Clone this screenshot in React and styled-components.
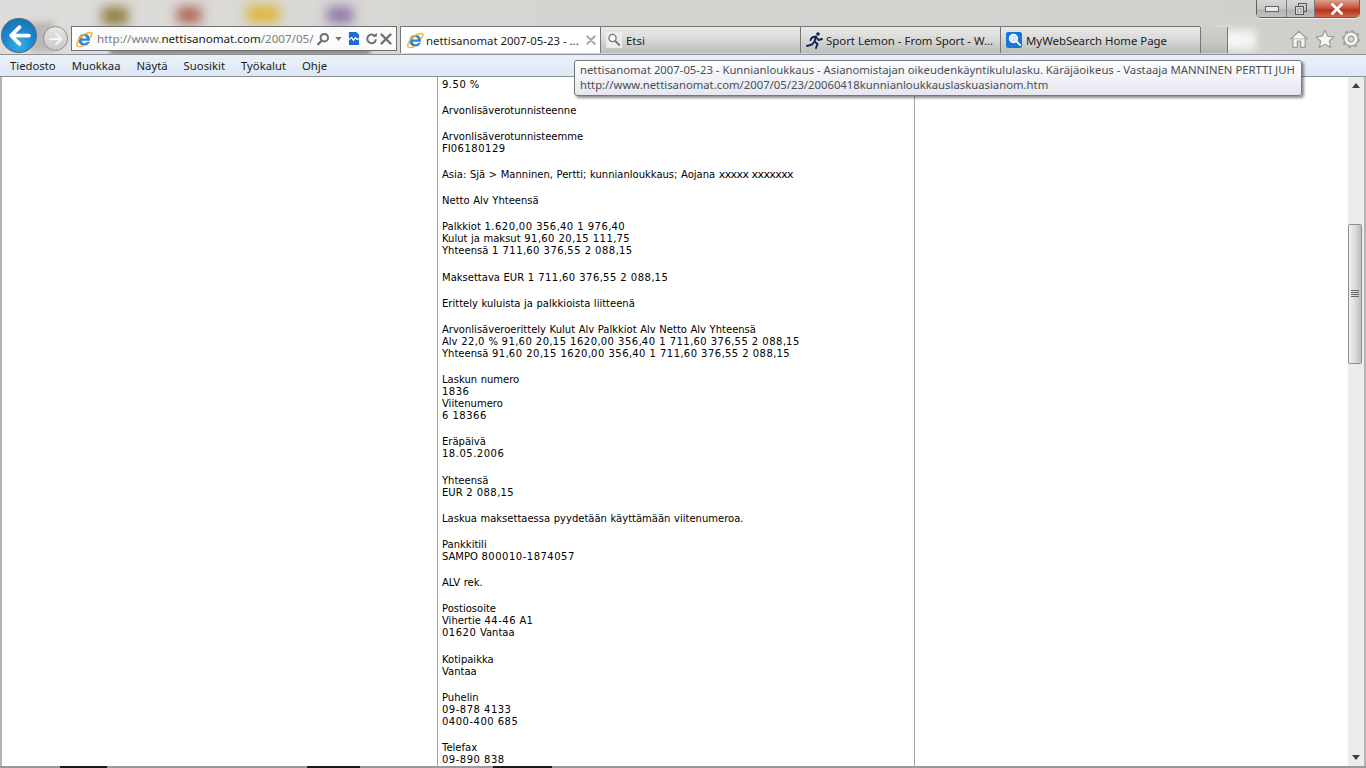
import React from "react";
import styled, { createGlobalStyle } from "styled-components";

const GlobalStyle = createGlobalStyle`
  html, body {
    margin: 0;
    padding: 0;
    background: #fff;
    overflow: hidden;
  }
`;

const UI_FONT = `"Noto Sans", "Open Sans", "Liberation Sans", sans-serif`;

const Window = styled.div`
  position: relative;
  width: 1366px;
  height: 768px;
  overflow: hidden;
  display: flex;
  flex-direction: column;
  font-family: ${UI_FONT};
`;

const Chrome = styled.div`
  position: relative;
  height: 55px;
  flex: none;
  display: flex;
  flex-direction: column;
  overflow: hidden;
  background: linear-gradient(90deg, #dedddb 0%, #d5d4d0 40%, #d4d3cf 70%, #cfcecb 100%);
  border-bottom: 1px solid #8e9195;
  box-sizing: border-box;
`;

const Blob = styled.div`
  position: absolute;
  top: ${(p) => p.$top}px;
  left: ${(p) => p.$left}px;
  width: ${(p) => p.$w}px;
  height: ${(p) => p.$h}px;
  background: ${(p) => p.$color};
  filter: blur(${(p) => p.$blur || 6}px);
`;

const WindowRow = styled.div`
  position: relative;
  height: 18px;
  display: flex;
  justify-content: flex-end;
  padding-right: 6px;
  margin-bottom: 8px;
`;

const WindowControls = styled.div`
  display: flex;
  height: 18px;
  border: 1px solid #5c5e60;
  border-top: 0;
  border-radius: 0 0 5px 5px;
  overflow: hidden;
  box-sizing: border-box;
  box-shadow: 0 1px 0 rgba(255, 255, 255, 0.7);
`;

const ControlButton = styled.div`
  width: ${(p) => p.$w}px;
  display: flex;
  align-items: center;
  justify-content: center;
  border-right: ${(p) => (p.$close ? "0" : "1px solid #77797b")};
  background: ${(p) =>
    p.$close
      ? "linear-gradient(180deg, #d9a18e 0%, #c9563c 45%, #b8321a 60%, #d2684a 100%)"
      : "linear-gradient(180deg, #d8d7d5 0%, #c8c7c5 50%, #b4b3b1 60%, #c2c1bf 100%)"};
`;

const ToolRow = styled.div`
  position: relative;
  flex: 1;
  display: flex;
  align-items: flex-start;
`;

const NavGroup = styled.div`
  width: 71px;
  height: 28px;
  flex: none;
  position: relative;
  display: flex;
  align-items: center;
`;

const BackButton = styled.div`
  position: absolute;
  left: 1px;
  top: -8px;
  width: 36px;
  height: 35px;
  border-radius: 50%;
  display: flex;
  align-items: center;
  justify-content: center;
  background: radial-gradient(circle at 50% 78%, #35b0e8 0%, #1a86cf 50%, #166aa8 100%);
  border: 1px solid #4d6c88;
  box-sizing: border-box;
  z-index: 2;
`;

const ForwardButton = styled.div`
  position: absolute;
  left: 43px;
  top: 0;
  width: 25px;
  height: 25px;
  border-radius: 50%;
  display: flex;
  align-items: center;
  justify-content: center;
  background: linear-gradient(180deg, #e6e6e4, #c9c8c6);
  border: 1px solid #8f8f8f;
  box-sizing: border-box;
`;

const BackHalo = styled.div`
  position: absolute;
  left: 30px;
  top: -4px;
  width: 24px;
  height: 30px;
  background: #b9b8b6;
  filter: blur(3px);
`;

const AddressBar = styled.div`
  width: 326px;
  height: 25px;
  flex: none;
  box-sizing: border-box;
  border: 1px solid #6f7072;
  background: rgba(255, 255, 255, 0.9);
  display: flex;
  align-items: center;
  padding-left: 3px;
  position: relative;
`;

const Url = styled.div`
  margin-left: 4px;
  font-size: 11.6px;
  color: #7b7b7b;
  white-space: nowrap;
  width: 216px;
  flex: none;
`;

const Domain = styled.span`
  color: #1a1a1a;
`;

const AddressIcons = styled.div`
  display: flex;
  align-items: center;
`;

const IconSlot = styled.div`
  width: ${(p) => p.$w}px;
  display: flex;
  justify-content: center;
  align-items: center;
`;

const TabStrip = styled.div`
  margin-left: 3px;
  width: 800px;
  height: 27px;
  flex: none;
  display: flex;
  box-sizing: border-box;
  border-top: 1px solid #75777a;
  border-left: 1px solid #75777a;
`;

const Tab = styled.div`
  width: ${(p) => p.$w}px;
  flex: none;
  box-sizing: border-box;
  height: 26px;
  display: flex;
  align-items: center;
  padding-left: 5px;
  border-right: 1px solid #75777a;
  background: ${(p) =>
    p.$active
      ? "#fff"
      : "linear-gradient(180deg, #e9e9e8 0%, #dcdcdb 40%, #bdbdbc 100%)"};
  font-size: 11.4px;
  color: #1c1c1c;
  white-space: nowrap;
  overflow: hidden;
`;

const TabIcon = styled.span`
  width: 20px;
  flex: none;
  display: flex;
  align-items: center;
`;

const TabTitle = styled.span`
  flex: 1;
`;

const TabClose = styled.span`
  width: 19px;
  flex: none;
  display: flex;
  justify-content: center;
`;

const EmptyTab = styled(Tab)`
  background: linear-gradient(180deg, #cfcecb 0%, #c8c7c4 60%, #b7b6b4 100%);
`;

const RightTools = styled.div`
  flex: 1;
  display: flex;
  justify-content: flex-end;
  align-items: center;
  height: 26px;
  gap: 6px;
  padding-right: 5px;
  position: relative;
`;

const MenuBar = styled.div`
  height: 22px;
  flex: none;
  box-sizing: border-box;
  display: flex;
  align-items: center;
  padding-left: 10px;
  gap: 16px;
  background: linear-gradient(180deg, #e9f0fa 0%, #dee8f5 100%);
  border-bottom: 1px solid #8d9196;
  font-size: 11.3px;
  color: #1b1b1b;
`;

const MenuItem = styled.span`
  white-space: nowrap;
`;

const Tooltip = styled.div`
  position: absolute;
  left: 574px;
  top: 60px;
  width: 728px;
  height: 36px;
  box-sizing: border-box;
  border: 1px solid #76797c;
  border-radius: 3px;
  background: linear-gradient(180deg, #ffffff 0%, #e5e6f0 100%);
  box-shadow: 2px 2px 3px rgba(0, 0, 0, 0.45);
  padding: 1px 0 0 5px;
  font-size: 11.3px;
  line-height: 15px;
  color: #4a4f55;
  white-space: nowrap;
  z-index: 5;
`;

const Viewport = styled.div`
  flex: 1;
  min-height: 0;
  display: flex;
  box-sizing: border-box;
  border-left: 2px solid #b4b4b4;
  border-right: 2px solid #b4b4b4;
  background: #fff;
  overflow: hidden;
`;

const Page = styled.div`
  flex: 1;
  display: flex;
  overflow: hidden;
`;

const SideColumn = styled.div`
  width: ${(p) => p.$w}px;
  flex: none;
`;

const Article = styled.div`
  width: 478px;
  flex: none;
  box-sizing: border-box;
  padding: 1.5px 0 0 4px;
  border-left: 1px solid #a4a4a4;
  border-right: 1px solid #a4a4a4;
  font-family: "DejaVu Sans", Verdana, sans-serif;
  font-size: 10px;
  word-spacing: 0.4px;
  line-height: 12px;
  color: #000;
`;

const Para = styled.p`
  margin: 0 0 14.2px;
`;

const Line = styled.span`
  display: block;
  white-space: nowrap;
`;

const Numeric = styled.span`
  letter-spacing: 0.5px;
`;

const Scrambled = styled.span`
  letter-spacing: -0.6px;
  font-size: 11px;
`;

const Scrollbar = styled.div`
  width: 16px;
  flex: none;
  display: flex;
  flex-direction: column;
  background: #ececec;
`;

const ScrollArrow = styled.div`
  height: 17px;
  flex: none;
  display: flex;
  align-items: center;
  justify-content: center;
`;

const ScrollTrack = styled.div`
  flex: 1;
  display: flex;
  flex-direction: column;
  padding-top: ${(p) => p.$offset}px;
`;

const ScrollThumb = styled.div`
  height: 140px;
  width: 14px;
  box-sizing: border-box;
  border: 1px solid #8f8f8f;
  border-radius: 2px;
  background: linear-gradient(90deg, #f0f0f0 0%, #dcdcdc 50%, #bdbdbd 100%);
  display: flex;
  align-items: center;
  justify-content: center;
`;

const Taskbar = styled.div`
  height: 2px;
  flex: none;
  display: flex;
  background: #9a9a9a;
`;

const TaskbarGap = styled.div`
  width: ${(p) => p.$w}px;
  flex: none;
`;

const TaskbarPiece = styled.div`
  width: ${(p) => p.$w}px;
  flex: none;
  background: #1c1c1c;
`;

const IeLogo = ({ size = 20 }) => (
  <svg width={size} height={size} viewBox="0 0 24 24">
    <path
      d="M4.500 13.500C4.500 8.800 8 5 12.500 5c4.500 0 7.500 3.200 7.500 8v1.200H9c.3 2.200 1.800 3.400 4 3.400 1.600 0 2.800-.6 3.600-1.800h3.200c-1 3-3.800 4.900-7 4.900C8 20.700 4.500 17.700 4.500 13.500zM9.100 11.300h6.600c-.2-2-1.500-3.200-3.300-3.200s-3 1.200-3.300 3.200z"
      fill="#2f86d6"
      fillRule="evenodd"
    />
    <path d="M3 21.500C.5 18 6.500 8.500 12 6c5-2.500 9.500-3.500 10.500-1.500.8 1.600-1 4-3 6" fill="none" stroke="#f2b632" strokeWidth="2" />
    <path d="M3 21.500c2 1.500 6 .5 9-1" fill="none" stroke="#efa52a" strokeWidth="1.600" />
  </svg>
);

const Arrow = ({ size, color, width, flip }) => (
  <svg width={size} height={size} viewBox="0 0 24 24" style={flip ? { transform: "scaleX(-1)" } : undefined}>
    <path d="M21 12H5M12 4l-8 8 8 8" fill="none" stroke={color} strokeWidth={width} strokeLinecap="round" strokeLinejoin="round" />
  </svg>
);

const SearchGlyph = () => (
  <svg width="14" height="14" viewBox="0 0 16 16">
    <circle cx="9.500" cy="6.500" r="4.300" fill="none" stroke="#6d6d6d" strokeWidth="2.200" />
    <path d="M6.500 9.800L2.500 14" stroke="#6d6d6d" strokeWidth="2.600" strokeLinecap="round" />
  </svg>
);

const DropCaret = () => (
  <svg width="7" height="4" viewBox="0 0 8 5">
    <path d="M0 0h8L4 5z" fill="#777" />
  </svg>
);

const CompatIcon = () => (
  <svg width="12" height="14" viewBox="0 0 13 15">
    <path d="M1 0h8l3 3v11H1z" fill="#1c6fd0" />
    <path d="M1 8l3-2 2 3 2-3 2 2 2-1" fill="none" stroke="#fff" strokeWidth="1.300" />
  </svg>
);

const RefreshIcon = () => (
  <svg width="13" height="13" viewBox="0 0 16 16">
    <path d="M12.500 5.500A5.300 5.300 0 1 0 13.400 9" fill="none" stroke="#6d6d6d" strokeWidth="2.400" />
    <path d="M9.500 5.800h5V1z" fill="#6d6d6d" />
  </svg>
);

const StopIcon = ({ color = "#6d6d6d", size = 12, width = 2.300 }) => (
  <svg width={size} height={size} viewBox="0 0 12 12">
    <path d="M1.500 1.500l9 9M10.500 1.500l-9 9" stroke={color} strokeWidth={width} strokeLinecap="round" />
  </svg>
);

const TabSearchIcon = () => (
  <svg width="16" height="16" viewBox="0 0 16 16">
    <rect width="16" height="16" fill="#ececec" />
    <circle cx="6.500" cy="6" r="3.600" fill="#fdfdfd" stroke="#777" strokeWidth="1.300" />
    <path d="M9.300 9l4 4" stroke="#8c7a5c" strokeWidth="2" strokeLinecap="round" />
  </svg>
);

const RunnerIcon = () => (
  <svg width="18" height="18" viewBox="0 0 18 18">
    <circle cx="12" cy="3" r="1.800" fill="#14204f" />
    <path d="M10 5.500L6 6.500 4.500 9M10 5.500l-1.500 5 3 2.500-1.500 4M8.500 10.500L6 13.500l-5 1.500M10.500 6.500l2 2.500 3.500-1" fill="none" stroke="#14204f" strokeWidth="1.900" strokeLinecap="round" strokeLinejoin="round" />
  </svg>
);

const MwsIcon = () => (
  <svg width="16" height="16" viewBox="0 0 16 16">
    <rect width="16" height="16" rx="2" fill="#1677d8" />
    <circle cx="7.500" cy="6.500" r="4" fill="#cfe6fb" stroke="#fff" strokeWidth="1.300" />
    <path d="M10.500 9.500l3.500 3.500" stroke="#fff" strokeWidth="1.800" strokeLinecap="round" />
  </svg>
);

const HomeIcon = () => (
  <svg width="20" height="20" viewBox="0 0 18 18">
    <path d="M1 9.500L9 2l8 7.500M3.500 8v8.500h4V11h3v5.500h4V8" fill="#f4f4f2" stroke="#9d9d9b" strokeWidth="1.100" strokeLinejoin="round" />
  </svg>
);

const StarIcon = () => (
  <svg width="20" height="20" viewBox="0 0 18 18">
    <path d="M9 1.200l2.400 5.200 5.600.7-4.100 3.900 1.100 5.600L9 13.800l-5 2.800 1.100-5.600L1 7.100l5.600-.7z" fill="#f6f6f4" stroke="#9d9d9b" strokeWidth="1.100" strokeLinejoin="round" />
  </svg>
);

const GearIcon = () => (
  <svg width="20" height="20" viewBox="0 0 18 18">
    <circle cx="9" cy="9" r="6.400" fill="#f2f2f0" stroke="#9d9d9b" strokeWidth="1.100" />
    <circle cx="9" cy="9" r="2.600" fill="#d9d8d5" stroke="#9d9d9b" strokeWidth="1" />
    <circle cx="9" cy="9" r="7.400" fill="none" stroke="#a5a5a3" strokeWidth="2" strokeDasharray="2.500 3.300" />
  </svg>
);

const MinimizeGlyph = () => (
  <svg width="14" height="6" viewBox="0 0 14 6">
    <rect x="0.500" y="0.500" width="13" height="5" fill="#e9e9e7" stroke="#66686a" />
  </svg>
);

const RestoreGlyph = () => (
  <svg width="12" height="12" viewBox="0 0 12 12">
    <rect x="3.500" y="0.500" width="8" height="8" fill="none" stroke="#55575a" />
    <rect x="0.500" y="3.500" width="8" height="8" fill="#d5d5d3" stroke="#55575a" />
    <rect x="3" y="6" width="3" height="3" fill="#fff" stroke="#55575a" strokeWidth="0.600" />
  </svg>
);

// digits run wider than the letters in the original page font
const withNumerics = (text) =>
  text.split(/([\d.\-]+)/).map((part, i) =>
    i % 2 ? <Numeric key={i}>{part}</Numeric> : part
  );

const MENU = ["Tiedosto", "Muokkaa", "Näytä", "Suosikit", "Työkalut", "Ohje"];

const PARAGRAPHS = [
  ["9.50 %"],
  ["Arvonlisäverotunnisteenne"],
  ["Arvonlisäverotunnisteemme", "FI06180129"],
  null,
  ["Netto Alv Yhteensä"],
  ["Palkkiot 1.620,00 356,40 1 976,40", "Kulut ja maksut 91,60 20,15 111,75", "Yhteensä 1 711,60 376,55 2 088,15"],
  ["Maksettava EUR 1 711,60 376,55 2 088,15"],
  ["Erittely kuluista ja palkkioista liitteenä"],
  [
    "Arvonlisäveroerittely Kulut Alv Palkkiot Alv Netto Alv Yhteensä",
    "Alv 22,0 % 91,60 20,15 1620,00 356,40 1 711,60 376,55 2 088,15",
    "Yhteensä 91,60 20,15 1620,00 356,40 1 711,60 376,55 2 088,15",
  ],
  ["Laskun numero", "1836", "Viitenumero", "6 18366"],
  ["Eräpäivä", "18.05.2006"],
  ["Yhteensä", "EUR 2 088,15"],
  ["Laskua maksettaessa pyydetään käyttämään viitenumeroa."],
  ["Pankkitili", "SAMPO 800010-1874057"],
  ["ALV rek."],
  ["Postiosoite", "Vihertie 44-46 A1", "01620 Vantaa"],
  ["Kotipaikka", "Vantaa"],
  ["Puhelin", "09-878 4133", "0400-400 685"],
  ["Telefax", "09-890 838"],
];

export default function App() {
  return (
    <Window>
      <GlobalStyle />
      <Chrome>
        <Blob $left={102} $top={7} $w={26} $h={18} $color="#8f7f45" />
        <Blob $left={177} $top={7} $w={24} $h={16} $color="#ad6450" />
        <Blob $left={247} $top={5} $w={32} $h={18} $color="#dcb83f" />
        <Blob $left={327} $top={7} $w={26} $h={16} $color="#8f74a6" />
        <Blob $left={110} $top={49} $w={260} $h={5} $color="#77766f" $blur={2} />
        <Blob $left={1212} $top={30} $w={44} $h={20} $color="#f6f6f5" $blur={5} />
        <WindowRow>
          <WindowControls>
            <ControlButton $w={29}>
              <MinimizeGlyph />
            </ControlButton>
            <ControlButton $w={27}>
              <RestoreGlyph />
            </ControlButton>
            <ControlButton $w={44} $close>
              <StopIcon color="#fff" size={12} width={2.800} />
            </ControlButton>
          </WindowControls>
        </WindowRow>
        <ToolRow>
          <NavGroup>
            <BackHalo />
            <BackButton>
              <Arrow size={25} color="#fff" width={3.600} />
            </BackButton>
            <ForwardButton>
              <Arrow size={16} color="#f6f6f5" width={3} flip />
            </ForwardButton>
          </NavGroup>
          <AddressBar>
            <IeLogo size={18} />
            <Url>
              http://www.<Domain>nettisanomat.com</Domain>/2007/05/
            </Url>
            <AddressIcons>
              <IconSlot $w={19}>
                <SearchGlyph />
              </IconSlot>
              <IconSlot $w={13}>
                <DropCaret />
              </IconSlot>
              <IconSlot $w={18}>
                <CompatIcon />
              </IconSlot>
              <IconSlot $w={16}>
                <RefreshIcon />
              </IconSlot>
              <IconSlot $w={14}>
                <StopIcon />
              </IconSlot>
            </AddressIcons>
          </AddressBar>
          <TabStrip>
            <Tab $w={200} $active>
              <TabIcon>
                <IeLogo size={18} />
              </TabIcon>
              <TabTitle>nettisanomat 2007-05-23 - ...</TabTitle>
              <TabClose>
                <StopIcon color="#a9a9a9" size={10} />
              </TabClose>
            </Tab>
            <Tab $w={200}>
              <TabIcon>
                <TabSearchIcon />
              </TabIcon>
              <TabTitle>Etsi</TabTitle>
            </Tab>
            <Tab $w={200}>
              <TabIcon>
                <RunnerIcon />
              </TabIcon>
              <TabTitle>Sport Lemon - From Sport - W...</TabTitle>
            </Tab>
            <Tab $w={200}>
              <TabIcon>
                <MwsIcon />
              </TabIcon>
              <TabTitle>MyWebSearch Home Page</TabTitle>
            </Tab>
            <EmptyTab $w={27} />
          </TabStrip>
          <RightTools>
            <HomeIcon />
            <StarIcon />
            <GearIcon />
          </RightTools>
        </ToolRow>
      </Chrome>
      <MenuBar>
        {MENU.map((item) => (
          <MenuItem key={item}>{item}</MenuItem>
        ))}
      </MenuBar>
      <Tooltip>
        nettisanomat 2007-05-23 - Kunnianloukkaus - Asianomistajan oikeudenkäyntikululasku. Käräjäoikeus - Vastaaja MANNINEN PERTTI JUH
        <br />
        http://www.nettisanomat.com/2007/05/23/20060418kunnianloukkauslaskuasianom.htm
      </Tooltip>
      <Viewport>
        <Page>
          <SideColumn $w={435} />
          <Article>
            {PARAGRAPHS.map((lines, i) => (
              <Para key={i}>
                {lines ? (
                  lines.map((line) => <Line key={line}>{withNumerics(line)}</Line>)
                ) : (
                  <Line>
                    Asia: Sjä &gt; Manninen, Pertti; kunnianloukkaus; Aojana <Scrambled>xxxxx xxxxxxx</Scrambled>
                  </Line>
                )}
              </Para>
            ))}
          </Article>
          <SideColumn $w={433} />
        </Page>
        <Scrollbar>
          <ScrollArrow>
            <svg width="8" height="5" viewBox="0 0 8 5">
              <path d="M4 0l4 5H0z" fill="#3f3f3f" />
            </svg>
          </ScrollArrow>
          <ScrollTrack $offset={130}>
            <ScrollThumb>
              <svg width="8" height="8" viewBox="0 0 8 8">
                <path d="M0 .5h8M0 2.500h8M0 4.500h8M0 6.500h8" stroke="#666" strokeWidth="1" />
              </svg>
            </ScrollThumb>
          </ScrollTrack>
          <ScrollArrow>
            <svg width="8" height="5" viewBox="0 0 8 5">
              <path d="M0 0h8L4 5z" fill="#3f3f3f" />
            </svg>
          </ScrollArrow>
        </Scrollbar>
      </Viewport>
      <Taskbar>
        <TaskbarGap $w={60} />
        <TaskbarPiece $w={47} />
        <TaskbarGap $w={200} />
        <TaskbarPiece $w={53} />
        <TaskbarGap $w={133} />
        <TaskbarPiece $w={59} />
      </Taskbar>
    </Window>
  );
}
